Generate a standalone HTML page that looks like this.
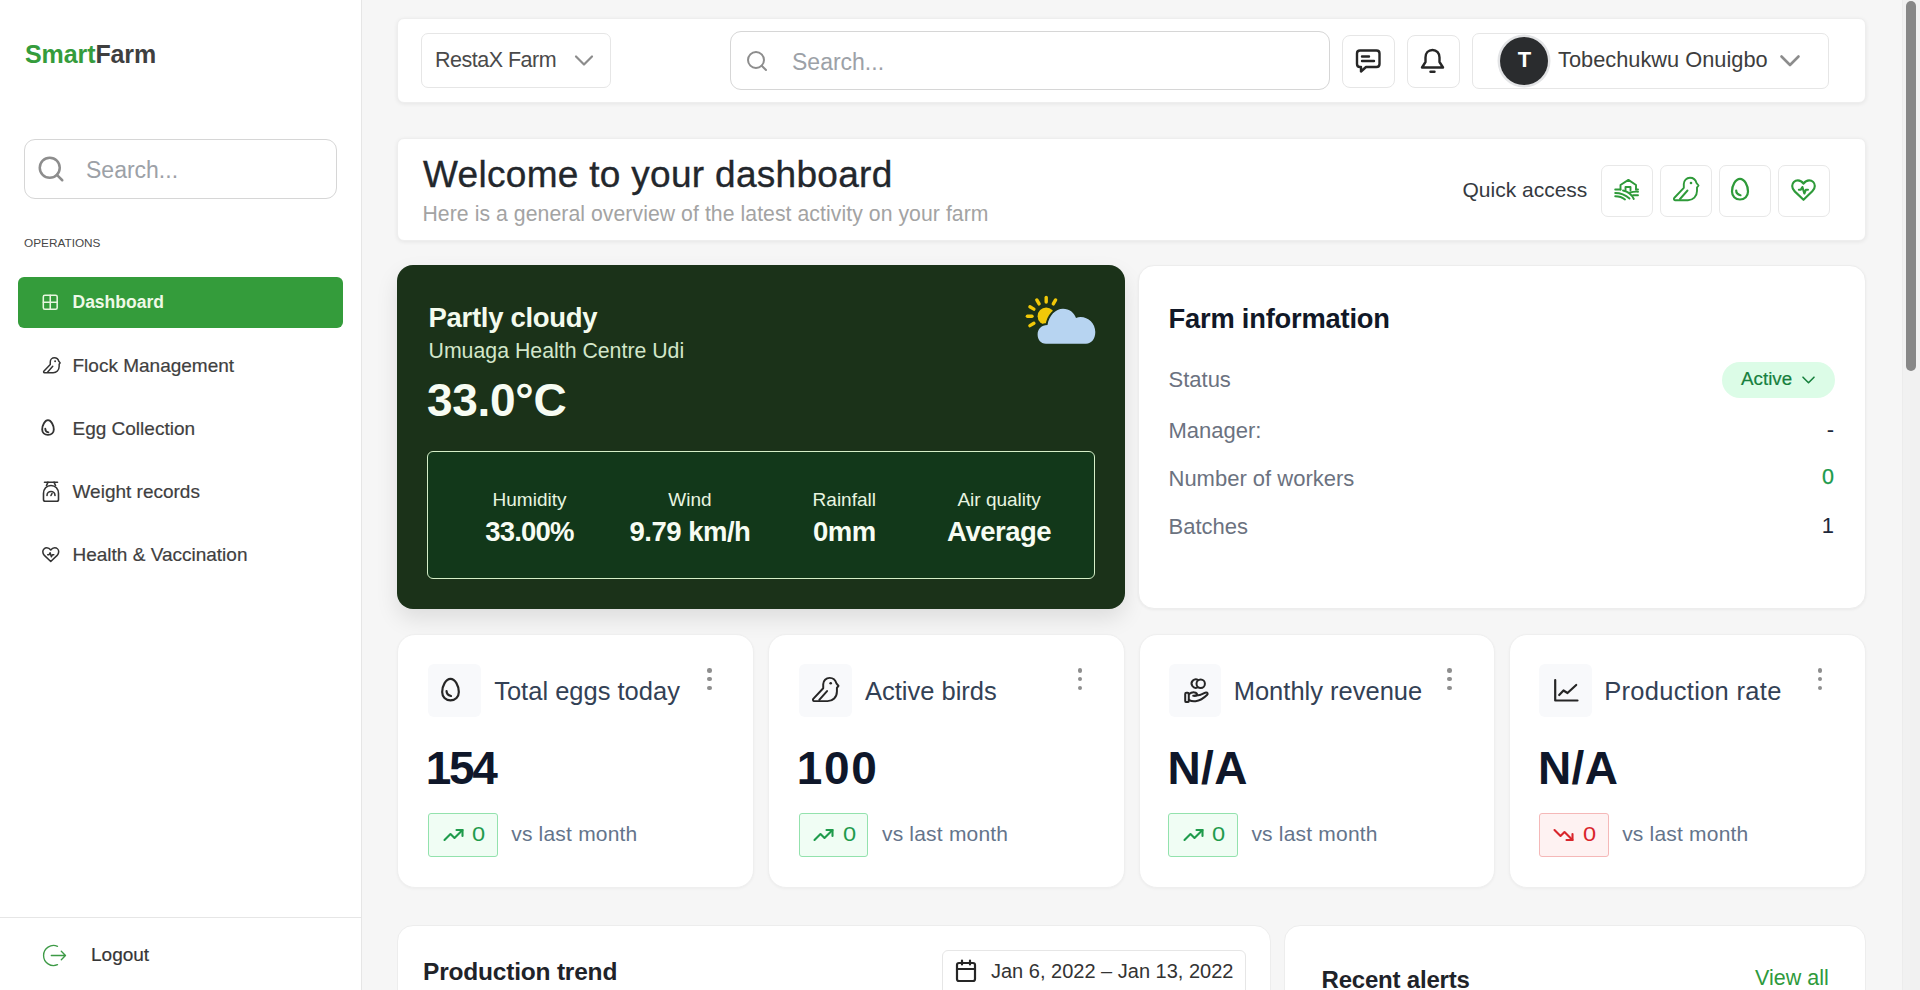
<!DOCTYPE html>
<html><head><meta charset="utf-8">
<style>
html,body{margin:0;padding:0;width:1920px;height:990px;overflow:hidden;background:#f6f6f6;font-family:"Liberation Sans",sans-serif;}
.a{position:absolute;}
.t{position:absolute;line-height:1;white-space:nowrap;}
.card{position:absolute;background:#fff;box-sizing:border-box;}
svg{position:absolute;overflow:visible;}
.ic{fill:none;stroke-linecap:round;stroke-linejoin:round;}
</style></head>
<body>
<!-- SIDEBAR -->
<div class="a" style="left:0;top:0;width:361px;height:990px;background:#fff;border-right:1px solid #e6e6e6;"></div>
<div class="t" style="left:25px;top:41.5px;font-size:25px;font-weight:700;letter-spacing:-0.1px"><span style="color:#359c3c">Smart</span><span style="color:#3f3f3f">Farm</span></div>

<div class="a" style="left:24px;top:139px;width:311px;height:58px;border:1px solid #d6d6d6;border-radius:11px;"></div>
<svg style="left:36px;top:154px" width="30" height="30" viewBox="0 0 24 24" class="ic" stroke="#8d8d8d" stroke-width="2"><circle cx="11" cy="11" r="8"/><path d="m21 21-4.3-4.3"/></svg>
<div class="t" style="left:86px;top:159.2px;font-size:23px;color:#9ca1a7">Search...</div>

<div class="t" style="left:24px;top:237.8px;font-size:11.8px;color:#474747">OPERATIONS</div>

<div class="a" style="left:18px;top:277px;width:325px;height:51px;background:#349c3b;border-radius:6px;"></div>
<svg style="left:40.8px;top:292.8px" width="18.5" height="18.5" viewBox="0 0 24 24" class="ic" stroke="#e8f6df" stroke-width="2"><rect x="3" y="3" width="18" height="18" rx="2"/><path d="M3 12h18M12 3v18"/></svg>
<div class="t" style="left:72.5px;top:294px;font-size:17.5px;font-weight:700;color:#eef9e6">Dashboard</div>

<!-- nav bird -->
<svg style="left:42.5px;top:356.5px" width="17.5" height="16.5" viewBox="0 0 26 24" class="ic" stroke="#333" color="#333" stroke-width="2.2"><path d="M2 23.2H15C20 23.2 24 19.5 24 14V10.5L25.5 8.5 23.5 6C22.5 2.5 19.8 0.8 17 0.8 13.5 0.8 10.8 3.5 10.8 7V10.8L1.2 21C0.6 21.8 1 23.2 2 23.2Z"/><path d="M7 22 14.5 13.5"/><circle cx="18" cy="6" r="1.4" fill="currentColor" stroke="none"/></svg>
<div class="t" style="left:72.5px;top:355.6px;font-size:19px;color:#3f3f3f;-webkit-text-stroke:0.2px #3f3f3f">Flock Management</div>

<!-- nav egg -->
<svg style="left:41px;top:419px" width="14" height="17" viewBox="0 0 18 22" class="ic" stroke="#333" stroke-width="2.4"><path d="M9 1.5C5 1.5 1.5 8 1.5 13.5 1.5 17.5 4.5 20.5 9 20.5S16.5 17.5 16.5 13.5C16.5 8 13 1.5 9 1.5Z"/><path d="M5.5 12.5C5.5 15 6.8 16.8 9.5 17.3"/></svg>
<div class="t" style="left:72.5px;top:419px;font-size:19px;color:#3f3f3f;-webkit-text-stroke:0.2px #3f3f3f">Egg Collection</div>

<!-- nav scale -->
<svg style="left:42px;top:480.5px" width="18" height="21.5" viewBox="0 0 18 21.5" class="ic" stroke="#333" stroke-width="1.6"><path d="M2.5 1.2H15.5"/><path d="M6 1.2 4.5 4.5M12 1.2 13.5 4.5"/><path d="M9 4.5C4.5 4.5 1.5 8 1.5 12.5V18.5C1.5 19.5 2.2 20.3 3.2 20.3H14.8C15.8 20.3 16.5 19.5 16.5 18.5V12.5C16.5 8 13.5 4.5 9 4.5Z"/><path d="M5 14.5A4 4 0 0 1 13 14.5"/><path d="M9 14.5 10 12.5"/></svg>
<div class="t" style="left:72.5px;top:481.6px;font-size:19px;color:#3f3f3f;-webkit-text-stroke:0.2px #3f3f3f">Weight records</div>

<!-- nav heart -->
<svg style="left:42px;top:546.5px" width="17.5" height="15.5" viewBox="0 0 26 23" class="ic" stroke="#333" stroke-width="2.3"><path d="M13 21.5 3.5 12.5C1.8 10.8 1.2 9 1.2 7.2 1.2 3.8 3.8 1.2 7.2 1.2 9.6 1.2 11.5 2.5 13 4.5 14.5 2.5 16.4 1.2 18.8 1.2 22.2 1.2 24.8 3.8 24.8 7.2 24.8 9 24.2 10.8 22.5 12.5Z"/><path d="M8.5 11.5H10.5L12 8.5 14 14.5 15.5 11.5H17.5"/></svg>
<div class="t" style="left:72.5px;top:544.9px;font-size:19px;color:#3f3f3f;-webkit-text-stroke:0.2px #3f3f3f">Health &amp; Vaccination</div>

<div class="a" style="left:0;top:917px;width:361px;height:1px;background:#e6e6e6;"></div>
<svg style="left:42px;top:944px" width="25" height="23" viewBox="0 0 25 23" class="ic" stroke="#3d9a46" stroke-width="1.35"><path d="M15.5 2.3A10 10 0 1 0 15.5 20.7"/><path d="M9.3 11.5H23.5M19.3 7.3 23.5 11.5 19.3 15.7"/></svg>
<div class="t" style="left:91px;top:944.6px;font-size:19px;color:#363636;-webkit-text-stroke:0.2px #363636">Logout</div>

<!-- HEADER CARD -->
<div class="card" style="left:397px;top:18px;width:1469px;height:85px;border-radius:7px;border:1px solid #eeeeee;box-shadow:0 1px 4px rgba(0,0,0,0.07);"></div>
<div class="a" style="left:421px;top:33px;width:188px;height:53px;border:1px solid #e6e6e6;border-radius:7px;"></div>
<div class="t" style="left:435px;top:50.4px;font-size:21.5px;letter-spacing:-0.5px;color:#4a4a4a">RestaX Farm</div>
<svg style="left:574px;top:54px" width="20" height="14" viewBox="0 0 20 14" class="ic" stroke="#8c8c8c" stroke-width="2.2"><path d="M2 2.5 10 10.5 18 2.5"/></svg>

<div class="a" style="left:730px;top:31px;width:598px;height:57px;border:1px solid #d6d6d6;border-radius:11px;"></div>
<svg style="left:745px;top:49.4px" width="24" height="24" viewBox="0 0 24 24" class="ic" stroke="#8d8d8d" stroke-width="2"><circle cx="11" cy="11" r="8"/><path d="m21 21-4.3-4.3"/></svg>
<div class="t" style="left:792px;top:50.9px;font-size:23px;color:#9ca1a7">Search...</div>

<div class="a" style="left:1342px;top:35px;width:51px;height:51px;border:1px solid #e6e6e6;border-radius:8px;"></div>
<svg style="left:1355px;top:48px" width="27" height="27" viewBox="0 0 27 27" class="ic" stroke="#262626" stroke-width="2.4"><path d="M5 2.5H21.5C23.2 2.5 24.5 3.8 24.5 5.5V16C24.5 17.7 23.2 19 21.5 19H11L6 23.5V19H5C3.3 19 2 17.7 2 16V5.5C2 3.8 3.3 2.5 5 2.5Z"/><path d="M7 8.5H14M7 13H19"/></svg>

<div class="a" style="left:1407px;top:35px;width:51px;height:51px;border:1px solid #e6e6e6;border-radius:8px;"></div>
<svg style="left:1420px;top:48px" width="25" height="26" viewBox="0 0 25 26" class="ic" stroke="#262626" stroke-width="2.4"><path d="M12.5 2C8.2 2 5.5 5.3 5.5 9.5V14L2 19.5H23L19.5 14V9.5C19.5 5.3 16.8 2 12.5 2Z"/><path d="M10.5 23.8H14.5"/></svg>

<div class="a" style="left:1472px;top:33px;width:355px;height:54px;border:1px solid #e6e6e6;border-radius:7px;"></div>
<div class="a" style="left:1500px;top:36.8px;width:48px;height:48px;border-radius:50%;background:#2a2c2e;box-shadow:0 0 0 2.5px #e3e4e6;"></div>
<div class="t" style="left:1514px;top:49.2px;font-size:22px;font-weight:700;color:#fff;width:21px;text-align:center">T</div>
<div class="t" style="left:1558px;top:49.3px;font-size:21.8px;color:#3d3d3d">Tobechukwu Onuigbo</div>
<svg style="left:1779px;top:54px" width="22" height="14" viewBox="0 0 22 14" class="ic" stroke="#8c8c8c" stroke-width="2.6"><path d="M2.5 2.5 11 11 19.5 2.5"/></svg>

<!-- WELCOME CARD -->
<div class="card" style="left:397px;top:138px;width:1469px;height:103px;border-radius:7px;border:1px solid #eeeeee;box-shadow:0 1px 4px rgba(0,0,0,0.07);"></div>
<div class="t" style="left:423px;top:156px;font-size:37px;letter-spacing:0.3px;color:#23272c;-webkit-text-stroke:0.35px #23272c">Welcome to your dashboard</div>
<div class="t" style="left:422.5px;top:202.8px;font-size:21.2px;letter-spacing:0.07px;color:#a3a3a3">Here is a general overview of the latest activity on your farm</div>
<div class="t" style="left:1462.5px;top:178.5px;font-size:21px;color:#363a3f">Quick access</div>
<div class="a" style="left:1600.5px;top:164.5px;width:50px;height:50px;border:1px solid #e8e8e8;border-radius:7px;"></div>
<div class="a" style="left:1659.5px;top:164.5px;width:50px;height:50px;border:1px solid #e8e8e8;border-radius:7px;"></div>
<div class="a" style="left:1718.5px;top:164.5px;width:50px;height:50px;border:1px solid #e8e8e8;border-radius:7px;"></div>
<div class="a" style="left:1777.5px;top:164.5px;width:50px;height:50px;border:1px solid #e8e8e8;border-radius:7px;"></div>
<!-- farm icon -->
<svg style="left:1614px;top:179px" width="25" height="22" viewBox="0 0 25 22" class="ic" stroke="#2e9a39" stroke-width="1.9"><path d="M6.5 10.5V6L14.4 0.9 22 6V10.5"/><path d="M11.5 11.2V8H16.5V11.2"/><path d="M1.2 10.5H6.5M22 10.5H24"/><path d="M1.2 14C7 14 11.5 16 15.5 19.5"/><path d="M1.2 17.3C5 17.3 8.5 18.5 11 20.5"/><path d="M9 11.5C14 12.5 17.5 15 19.8 20"/><path d="M16 13.5C18.5 12.7 21.5 12.6 24 12.7"/><path d="M19 16.3H24"/></svg>
<!-- bird icon -->
<svg style="left:1673px;top:177px" width="26" height="24" viewBox="0 0 26 24" class="ic" stroke="#2e9a39" color="#2e9a39" stroke-width="1.9"><path d="M2 23.2H15C20 23.2 24 19.5 24 14V10.5L25.5 8.5 23.5 6C22.5 2.5 19.8 0.8 17 0.8 13.5 0.8 10.8 3.5 10.8 7V10.8L1.2 21C0.6 21.8 1 23.2 2 23.2Z"/><path d="M7 22 14.5 13.5"/><circle cx="18" cy="6" r="1.3" fill="currentColor" stroke="none"/></svg>
<!-- egg icon -->
<svg style="left:1730px;top:177px" width="20" height="24" viewBox="0 0 20 24" class="ic" stroke="#2e9a39" stroke-width="2.2"><path d="M10 1.8C5.5 1.8 2 8.5 2 14.5 2 19 5.3 22.5 10 22.5S18 19 18 14.5C18 8.5 14.5 1.8 10 1.8Z"/><path d="M6.2 13.5C6.2 15.8 7.8 17.6 10.5 18.2"/></svg>
<!-- heart pulse icon -->
<svg style="left:1791px;top:178.5px" width="25" height="22.5" viewBox="0 0 27 24" class="ic" stroke="#2e9a39" stroke-width="2.3"><path d="M13.5 22.3 4 13.2C2.2 11.4 1.3 9.5 1.3 7.4 1.3 3.9 4 1.3 7.4 1.3 9.9 1.3 11.9 2.6 13.5 4.8 15.1 2.6 17.1 1.3 19.6 1.3 23 1.3 25.7 3.9 25.7 7.4 25.7 9.5 24.8 11.4 23 13.2Z"/><path d="M8.5 11.5H10.5L12.3 8.5 14.4 15.5 16 11.5H18.3"/></svg>

<!-- WEATHER CARD -->
<div class="card" style="left:397px;top:265px;width:728px;height:344px;border-radius:16px;background:#1b3219;box-shadow:0 10px 22px rgba(0,0,0,0.10);"></div>
<div class="t" style="left:428.5px;top:303.6px;font-size:27.5px;font-weight:700;color:#f4fbee;letter-spacing:-0.3px">Partly cloudy</div>
<div class="t" style="left:428.5px;top:340.6px;font-size:21.3px;color:#d3e6ca">Umuaga Health Centre Udi</div>
<div class="t" style="left:427px;top:376.7px;font-size:46px;font-weight:700;color:#f7fcf3;letter-spacing:-0.3px">33.0°C</div>
<svg style="left:1022px;top:292px" width="76" height="56" viewBox="0 0 76 56">
 <g stroke="#f0c808" stroke-width="3.4" stroke-linecap="round" fill="none"><path d="M24.20 10.00L24.20 5.40"/><path d="M17.10 11.90L14.80 7.92"/><path d="M31.30 11.90L33.60 7.92"/><path d="M11.90 17.10L7.92 14.80"/><path d="M10.00 24.20L5.40 24.20"/><path d="M11.90 31.30L7.92 33.60"/></g>
 <circle cx="24.2" cy="24.2" r="8.6" fill="#f0c808"/>
 <path d="M24 51.7C18.5 51.7 15.6 47.5 15.6 42.5 15.6 37 19.5 33 25.5 33 27 23.5 33.5 16.7 41 16.7 47.5 16.7 52 20.5 54 26 55.5 25.3 57 25 58.5 25 66.5 25 73.3 31.5 73.3 40 73.3 47 69.5 51.7 64 51.7Z" fill="#b7d4f1" stroke="#1b3219" stroke-width="4" paint-order="stroke"/>
</svg>
<div class="a" style="left:427px;top:451px;width:666px;height:126px;border:1px solid #d5efc8;border-radius:6px;background:#12381a;"></div>
<div class="t" style="left:429.5px;width:200px;text-align:center;top:489.8px;font-size:19px;color:#e8f5e0">Humidity</div>
<div class="t" style="left:590px;width:200px;text-align:center;top:489.8px;font-size:19px;color:#e8f5e0">Wind</div>
<div class="t" style="left:744.3px;width:200px;text-align:center;top:489.8px;font-size:19px;color:#e8f5e0">Rainfall</div>
<div class="t" style="left:899.1px;width:200px;text-align:center;top:489.8px;font-size:19px;color:#e8f5e0">Air quality</div>
<div class="t" style="left:429.5px;width:200px;text-align:center;top:518.4px;font-size:27.5px;font-weight:700;color:#f7fcf3;letter-spacing:-0.8px">33.00%</div>
<div class="t" style="left:590px;width:200px;text-align:center;top:518.4px;font-size:27.5px;font-weight:700;color:#f7fcf3;letter-spacing:-0.5px">9.79 km/h</div>
<div class="t" style="left:744.3px;width:200px;text-align:center;top:518.4px;font-size:27.5px;font-weight:700;color:#f7fcf3;letter-spacing:-0.5px">0mm</div>
<div class="t" style="left:899.1px;width:200px;text-align:center;top:518.4px;font-size:27.5px;font-weight:700;color:#f7fcf3;letter-spacing:-0.5px">Average</div>

<!-- FARM INFO CARD -->
<div class="card" style="left:1137.5px;top:265px;width:728.5px;height:344px;border-radius:16px;border:1px solid #ededed;box-shadow:0 1px 3px rgba(0,0,0,0.05);"></div>
<div class="t" style="left:1168.5px;top:304.9px;font-size:27.3px;font-weight:700;color:#111827;letter-spacing:-0.2px">Farm information</div>
<div class="t" style="left:1168.5px;top:368.5px;font-size:22px;color:#6b7280">Status</div>
<div class="t" style="left:1168.5px;top:419.7px;font-size:22px;color:#6b7280">Manager:</div>
<div class="t" style="left:1168.5px;top:467.8px;font-size:22px;color:#6b7280">Number of workers</div>
<div class="t" style="left:1168.5px;top:515.6px;font-size:22px;color:#6b7280">Batches</div>
<div class="a" style="left:1722px;top:362px;width:112.5px;height:35.5px;border-radius:18px;background:#dcfce7;"></div>
<div class="t" style="left:1741px;top:370px;font-size:18.8px;color:#17803d;-webkit-text-stroke:0.2px #17803d">Active</div>
<svg style="left:1801px;top:375px" width="15" height="10" viewBox="0 0 15 10" class="ic" stroke="#17803d" stroke-width="1.6"><path d="M2 2.2 7.5 7.7 13 2.2"/></svg>
<div class="t" style="left:1634px;width:200px;text-align:right;top:418.5px;font-size:22px;color:#1e293b">-</div>
<div class="t" style="left:1634px;width:200px;text-align:right;top:467.2px;font-size:21.5px;color:#1b9a4b;-webkit-text-stroke:0.25px #1b9a4b">0</div>
<div class="t" style="left:1634px;width:200px;text-align:right;top:514.7px;font-size:22px;color:#1e293b">1</div>

<div class="card" style="left:397px;top:633.6px;width:356.75px;height:254px;border-radius:18px;border:1px solid #efefef;box-shadow:0 1px 3px rgba(0,0,0,0.04);"></div>
<div class="a" style="left:428.30px;top:664.2px;width:52.5px;height:52.5px;border-radius:6px;background:#f8f9fb;"></div>
<svg style="left:439.5px;top:676.5px" width="21" height="25" viewBox="0 0 20 24" class="ic" stroke="#262626" stroke-width="2.1"><path d="M10 1.8C5.5 1.8 2 8.5 2 14.5 2 19 5.3 22.5 10 22.5S18 19 18 14.5C18 8.5 14.5 1.8 10 1.8Z"/><path d="M6.2 13.5C6.2 15.8 7.8 17.6 10.5 18.2"/></svg>
<div class="t" style="left:494.20px;top:679.4px;font-size:25.5px;color:#334155">Total eggs today</div>
<div class="a" style="left:707.00px;top:668px;width:4.5px;height:4.5px;border-radius:50%;background:#8e8e8e;"></div>
<div class="a" style="left:707.00px;top:676.8px;width:4.5px;height:4.5px;border-radius:50%;background:#8e8e8e;"></div>
<div class="a" style="left:707.00px;top:685.6px;width:4.5px;height:4.5px;border-radius:50%;background:#8e8e8e;"></div>
<div class="t" style="left:425.8px;top:745.1px;font-size:46px;font-weight:700;color:#0f172a;letter-spacing:-2.3px">154</div>
<div class="a" style="left:428.10px;top:813px;width:67.6px;height:41.5px;border-radius:3px;border:1px solid #93e2ad;background:#f0fdf4;"></div>
<svg style="left:441.50px;top:826px" width="23" height="18" viewBox="0 0 22 18" class="ic" stroke="#1f9b4c" stroke-width="2.1"><path d="M2 14 8 8 12 12 20 4"/><path d="M14 4H20V10"/></svg>
<div class="t" style="left:472.20px;top:824.3px;font-size:20px;color:#1f9b4c;transform:scaleX(1.18);transform-origin:0 0">0</div>
<div class="t" style="left:511.20px;top:823.4px;font-size:21px;letter-spacing:0.2px;color:#64748b">vs last month</div>

<div class="card" style="left:767.75px;top:633.6px;width:356.75px;height:254px;border-radius:18px;border:1px solid #efefef;box-shadow:0 1px 3px rgba(0,0,0,0.04);"></div>
<div class="a" style="left:799.05px;top:664.2px;width:52.5px;height:52.5px;border-radius:6px;background:#f8f9fb;"></div>
<svg style="left:811.5px;top:677px" width="27" height="25" viewBox="0 0 26 24" class="ic" stroke="#262626" color="#262626" stroke-width="1.9"><path d="M2 23.2H15C20 23.2 24 19.5 24 14V10.5L25.5 8.5 23.5 6C22.5 2.5 19.8 0.8 17 0.8 13.5 0.8 10.8 3.5 10.8 7V10.8L1.2 21C0.6 21.8 1 23.2 2 23.2Z"/><path d="M7 22 14.5 13.5"/><circle cx="18" cy="6" r="1.3" fill="currentColor" stroke="none"/></svg>
<div class="t" style="left:864.95px;top:679.4px;font-size:25.5px;color:#334155">Active birds</div>
<div class="a" style="left:1077.75px;top:668px;width:4.5px;height:4.5px;border-radius:50%;background:#8e8e8e;"></div>
<div class="a" style="left:1077.75px;top:676.8px;width:4.5px;height:4.5px;border-radius:50%;background:#8e8e8e;"></div>
<div class="a" style="left:1077.75px;top:685.6px;width:4.5px;height:4.5px;border-radius:50%;background:#8e8e8e;"></div>
<div class="t" style="left:796.8px;top:745.1px;font-size:46px;font-weight:700;color:#0f172a;letter-spacing:1.6px">100</div>
<div class="a" style="left:798.85px;top:813px;width:67.6px;height:41.5px;border-radius:3px;border:1px solid #93e2ad;background:#f0fdf4;"></div>
<svg style="left:812.25px;top:826px" width="23" height="18" viewBox="0 0 22 18" class="ic" stroke="#1f9b4c" stroke-width="2.1"><path d="M2 14 8 8 12 12 20 4"/><path d="M14 4H20V10"/></svg>
<div class="t" style="left:842.95px;top:824.3px;font-size:20px;color:#1f9b4c;transform:scaleX(1.18);transform-origin:0 0">0</div>
<div class="t" style="left:881.95px;top:823.4px;font-size:21px;letter-spacing:0.2px;color:#64748b">vs last month</div>

<div class="card" style="left:1138.5px;top:633.6px;width:356.75px;height:254px;border-radius:18px;border:1px solid #efefef;box-shadow:0 1px 3px rgba(0,0,0,0.04);"></div>
<div class="a" style="left:1168.50px;top:664.2px;width:52.5px;height:52.5px;border-radius:6px;background:#f8f9fb;"></div>
<svg style="left:1182.5px;top:677.5px" width="26" height="26" viewBox="0 0 26 26" class="ic" stroke="#262626" stroke-width="2"><path d="M14.6 9.4A4.2 4.2 0 1 1 15.3 2.2"/><circle cx="17.7" cy="5.8" r="4.2"/><rect x="2.2" y="14.7" width="3.6" height="9.4" rx="1.2"/><path d="M5.8 16.2C7.5 14.9 9.5 14.2 11.5 14.4 13.3 14.6 14.2 15.6 14 16.6 13.8 17.4 12.9 17.8 11.8 17.8H10.2"/><path d="M11.8 17.8 16.8 17.1C19.2 16.1 21.3 14.8 23 14.6 24.5 14.5 25.2 15.8 24.2 16.8 21.2 19.8 17.5 22.6 12.5 23.2 10 23.5 7.8 23 5.8 22"/></svg>
<div class="t" style="left:1233.7px;top:679.4px;font-size:25.5px;color:#334155">Monthly revenue</div>
<div class="a" style="left:1447.20px;top:668px;width:4.5px;height:4.5px;border-radius:50%;background:#8e8e8e;"></div>
<div class="a" style="left:1447.20px;top:676.8px;width:4.5px;height:4.5px;border-radius:50%;background:#8e8e8e;"></div>
<div class="a" style="left:1447.20px;top:685.6px;width:4.5px;height:4.5px;border-radius:50%;background:#8e8e8e;"></div>
<div class="t" style="left:1167.5px;top:745.1px;font-size:46px;font-weight:700;color:#0f172a;letter-spacing:0.4px">N/A</div>
<div class="a" style="left:1168.30px;top:813px;width:67.6px;height:41.5px;border-radius:3px;border:1px solid #93e2ad;background:#f0fdf4;"></div>
<svg style="left:1181.70px;top:826px" width="23" height="18" viewBox="0 0 22 18" class="ic" stroke="#1f9b4c" stroke-width="2.1"><path d="M2 14 8 8 12 12 20 4"/><path d="M14 4H20V10"/></svg>
<div class="t" style="left:1212.40px;top:824.3px;font-size:20px;color:#1f9b4c;transform:scaleX(1.18);transform-origin:0 0">0</div>
<div class="t" style="left:1251.40px;top:823.4px;font-size:21px;letter-spacing:0.2px;color:#64748b">vs last month</div>

<div class="card" style="left:1509.25px;top:633.6px;width:356.75px;height:254px;border-radius:18px;border:1px solid #efefef;box-shadow:0 1px 3px rgba(0,0,0,0.04);"></div>
<div class="a" style="left:1539.25px;top:664.2px;width:52.5px;height:52.5px;border-radius:6px;background:#f8f9fb;"></div>
<svg style="left:1553px;top:678px" width="26" height="25" viewBox="0 0 26 25" class="ic" stroke="#262626" stroke-width="2.2"><path d="M2.2 2V22.5H24.5"/><path d="M6.2 17 10.5 12.5 14.5 15 23.2 7"/></svg>
<div class="t" style="left:1604.2px;top:679.4px;font-size:25.5px;letter-spacing:0.3px;color:#334155">Production rate</div>
<div class="a" style="left:1817.95px;top:668px;width:4.5px;height:4.5px;border-radius:50%;background:#8e8e8e;"></div>
<div class="a" style="left:1817.95px;top:676.8px;width:4.5px;height:4.5px;border-radius:50%;background:#8e8e8e;"></div>
<div class="a" style="left:1817.95px;top:685.6px;width:4.5px;height:4.5px;border-radius:50%;background:#8e8e8e;"></div>
<div class="t" style="left:1538px;top:745.1px;font-size:46px;font-weight:700;color:#0f172a;letter-spacing:0.4px">N/A</div>
<div class="a" style="left:1539.05px;top:813px;width:67.6px;height:41.5px;border-radius:3px;border:1px solid #f5b8b8;background:#fef2f2;"></div>
<svg style="left:1552.45px;top:826px" width="23" height="18" viewBox="0 0 22 18" class="ic" stroke="#d9262c" stroke-width="2.1"><path d="M2 4 8 10 12 6 20 14"/><path d="M14 14H20V8"/></svg>
<div class="t" style="left:1583.15px;top:824.3px;font-size:20px;color:#d9262c;transform:scaleX(1.18);transform-origin:0 0">0</div>
<div class="t" style="left:1622.15px;top:823.4px;font-size:21px;letter-spacing:0.2px;color:#64748b">vs last month</div>

<!-- BOTTOM CARDS -->
<div class="card" style="left:397px;top:924.5px;width:873.5px;height:200px;border-radius:16px;border:1px solid #ededed;"></div>
<div class="t" style="left:423px;top:960px;font-size:24.5px;font-weight:700;color:#1f2329;letter-spacing:-0.2px">Production trend</div>
<div class="a" style="left:941.5px;top:949.5px;width:302px;height:80px;border:1px solid #e6e6e6;border-radius:6px;"></div>
<svg style="left:954px;top:958px" width="24" height="25" viewBox="0 0 24 25" class="ic" stroke="#262626" stroke-width="2.2"><rect x="3" y="5" width="18" height="18" rx="2"/><path d="M3 11H21M8 2.5V6.5M16 2.5V6.5"/></svg>
<div class="t" style="left:991px;top:960.8px;font-size:20px;color:#333">Jan 6, 2022 – Jan 13, 2022</div>
<div class="card" style="left:1283.5px;top:924.5px;width:582.5px;height:200px;border-radius:16px;border:1px solid #ededed;"></div>
<div class="t" style="left:1321.5px;top:967.9px;font-size:24px;font-weight:700;color:#1f2329;letter-spacing:-0.2px">Recent alerts</div>
<div class="t" style="left:1755px;top:967.9px;font-size:21.5px;color:#2e9a3c">View all</div>

<!-- SCROLLBAR -->
<div class="a" style="left:1902px;top:0;width:18px;height:990px;background:#f1f1f1;border-left:1px solid #ececec;box-sizing:border-box;"></div>
<div class="a" style="left:1906px;top:1px;width:10px;height:370px;border-radius:5px;background:#878787;"></div>
</body></html>
